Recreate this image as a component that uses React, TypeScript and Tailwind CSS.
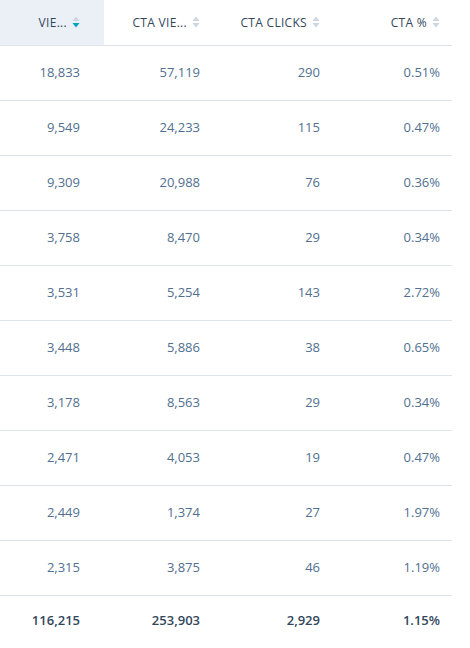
import React from "react";

const rows = [
  ["18,833", "57,119", "290", "0.51%"],
  ["9,549", "24,233", "115", "0.47%"],
  ["9,309", "20,988", "76", "0.36%"],
  ["3,758", "8,470", "29", "0.34%"],
  ["3,531", "5,254", "143", "2.72%"],
  ["3,448", "5,886", "38", "0.65%"],
  ["3,178", "8,563", "29", "0.34%"],
  ["2,471", "4,053", "19", "0.47%"],
  ["2,449", "1,374", "27", "1.97%"],
  ["2,315", "3,875", "46", "1.19%"],
];

const totals = ["116,215", "253,903", "2,929", "1.15%"];

function SortIcon({ active }: { active?: boolean }) {
  return (
    <svg width="8" height="13" viewBox="0 0 8 13" className="shrink-0">
      <path d="M4 0.5 L7.5 5 L0.5 5 Z" fill="#cbd6e2" />
      <path d="M0.5 7 L7.5 7 L4 11.5 Z" fill={active ? "#00a4bd" : "#cbd6e2"} />
    </svg>
  );
}

function HeaderCell({ label, active, width }: { label: string; active?: boolean; width: string }) {
  return (
    <div
      className={`${width} h-[45px] shrink-0 flex items-center justify-end gap-[5px] pr-6 ${
        active ? "bg-[#eaf0f6]" : ""
      }`}
    >
      <span className="text-[12px] text-[#33475b] tracking-[0.3px]">{label}</span>
      <SortIcon active={active} />
    </div>
  );
}

export default function App() {
  const widths = ["w-[104px]", "w-[120px]", "w-[120px]", "w-[120px]"];
  return (
    <div className="w-[470px] h-[648px] bg-white overflow-hidden" style={{ fontFamily: "'Open Sans', Lato, sans-serif" }}>
      <div className="w-[452px] overflow-hidden">
        <div className="flex w-[464px] border-b border-[#dfe3eb]">
          <HeaderCell label="VIE..." active width={widths[0]} />
          <HeaderCell label="CTA VIE..." width={widths[1]} />
          <HeaderCell label="CTA CLICKS" width={widths[2]} />
          <HeaderCell label="CTA %" width={widths[3]} />
        </div>
        {rows.map((r, i) => (
          <div key={i} className="flex w-[464px] h-[55px] items-center border-b border-[#dfe3eb]">
            {r.map((v, j) => (
              <div key={j} className={`${widths[j]} shrink-0 pr-6 text-right text-[13px] text-[#516f90]`}>
                {v}
              </div>
            ))}
          </div>
        ))}
        <div className="flex w-[464px] h-[50px] items-center">
          {totals.map((v, j) => (
            <div key={j} className={`${widths[j]} shrink-0 pr-6 text-right text-[13px] font-semibold text-[#33475b]`}>
              {v}
            </div>
          ))}
        </div>
      </div>
    </div>
  );
}
